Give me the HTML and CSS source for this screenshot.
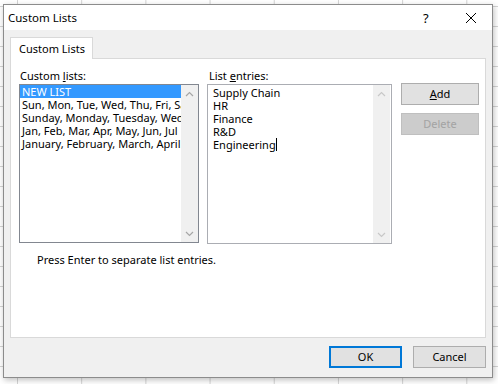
FILE: index.html
```html
<html>
    <head>
        <link rel="stylesheet" href="styles.css">
    </head>

    <body>
        <div class="dialog">
            <div class="titlebar">
                <span class="title">Custom Lists</span>
                <span class="help">?</span>
                <svg class="close" width="12" height="12" viewBox="0 0 12 12">
                    <path d="M1 1L11 11M11 1L1 11" stroke="#000" stroke-width="1" fill="none"/>
                </svg>
            </div>
            <div class="content">
                <div class="tabs">
                    <div class="tab">Custom Lists</div>
                </div>
                <div class="panel">
                    <div class="columns">
                        <div class="col">
                            <label class="field-label">Custom <u>l</u>ists:</label>
                            <div class="listbox">
                                <div class="rows">
                                    <div class="row selected">NEW LIST</div>
                                    <div class="row">Sun, Mon, Tue, Wed, Thu, Fri, Sat</div>
                                    <div class="row">Sunday, Monday, Tuesday, Wednesday</div>
                                    <div class="row">Jan, Feb, Mar, Apr, May, Jun, Jul</div>
                                    <div class="row">January, February, March, April</div>
                                </div>
                                <div class="scrollbar">
                                    <svg width="9" height="6" viewBox="0 0 9 6"><path d="M1 5L4.5 1.5L8 5" stroke="#a6a6a6" stroke-width="1.2" fill="none"/></svg>
                                    <svg width="9" height="6" viewBox="0 0 9 6"><path d="M1 1L4.5 4.5L8 1" stroke="#a6a6a6" stroke-width="1.2" fill="none"/></svg>
                                </div>
                            </div>
                        </div>
                        <div class="col">
                            <label class="field-label">List <u>e</u>ntries:</label>
                            <div class="listbox entries">
                                <div class="rows">
                                    <div class="row">Supply Chain</div>
                                    <div class="row">HR</div>
                                    <div class="row">Finance</div>
                                    <div class="row">R&amp;D</div>
                                    <div class="row">Engineering<span class="caret"></span></div>
                                </div>
                                <div class="scrollbar">
                                    <svg width="9" height="6" viewBox="0 0 9 6"><path d="M1 5L4.5 1.5L8 5" stroke="#c8c8c8" stroke-width="1.2" fill="none"/></svg>
                                    <svg width="9" height="6" viewBox="0 0 9 6"><path d="M1 1L4.5 4.5L8 1" stroke="#c8c8c8" stroke-width="1.2" fill="none"/></svg>
                                </div>
                            </div>
                        </div>
                        <div class="col-buttons">
                            <button class="btn"><u>A</u>dd</button>
                            <button class="btn" disabled>Delete</button>
                        </div>
                    </div>
                    <p class="hint">Press Enter to separate list entries.</p>
                </div>
                <div class="footer">
                    <button class="btn btn-footer btn-default">OK</button>
                    <button class="btn btn-footer">Cancel</button>
                </div>
            </div>
        </div>
    </body>
</html>
```

FILE: styles.css
```css
* {
    box-sizing: border-box;
}

body {
    margin: 0;
    width: 498px;
    height: 384px;
    overflow: hidden;
    font-family: "Noto Sans", sans-serif;
    font-size: 11px;
    color: #000;
    background-color: #fff;
    background-image:
        linear-gradient(to right, #d4d4d4 1px, transparent 1px),
        linear-gradient(to bottom, #d4d4d4 1px, transparent 1px);
    background-size: 64.2px 20px;
    background-position: 17px 0, 0 6px;
}

.dialog {
    margin: 4px 0 0 3px;
    width: 490px;
    height: 374px;
    border: 1px solid #8c8c8c;
    background: #f0f0f0;
    display: flex;
    flex-direction: column;
    box-shadow: 1px 2px 6px rgba(0, 0, 0, .25);
}

.titlebar {
    height: 25px;
    background: #fff;
    display: flex;
    align-items: center;
    padding: 0 0 0 4px;
}

.title {
    flex: 1;
    font-size: 11.5px;
    line-height: 14px;
}

.help {
    width: 14px;
    margin-right: 28px;
    font-size: 13px;
}

.close {
    margin-right: 15px;
}

.content {
    flex: 1;
    padding: 7px 6px 0 6px;
    display: flex;
    flex-direction: column;
}

.tabs {
    display: flex;
    height: 21px;
    position: relative;
    z-index: 1;
}

.tab {
    width: 83px;
    height: 22px;
    background: #fff;
    border: 1px solid #d9d9d9;
    border-bottom: none;
    padding: 3px 0 0 8px;
    line-height: 15px;
}

.panel {
    height: 280px;
    background: #fff;
    border: 1px solid #d9d9d9;
    padding: 9px 7px 0 8px;
}

.columns {
    display: flex;
    gap: 9px;
}

.col {
    display: flex;
    flex-direction: column;
}

.field-label {
    line-height: 15px;
    margin-bottom: 1px;
    padding-left: 1px;
}

.listbox {
    width: 180px;
    height: 159px;
    border: 1px solid #828790;
    display: flex;
}

.listbox.entries {
    width: 185px;
    height: 160px;
    border-color: #abadb3;
    margin-left: -1px;
}

.rows {
    flex: 1;
    overflow: hidden;
    white-space: nowrap;
}

.row {
    height: 13px;
    line-height: 13px;
    padding-left: 2px;
}

.entries .rows {
    padding: 1px 0 0 3px;
}

.selected {
    background: #3399ff;
    color: #fff;
}

.caret {
    display: inline-block;
    width: 1px;
    height: 13px;
    background: #000;
    vertical-align: top;
}

.scrollbar {
    width: 17px;
    background: #f0f0f0;
    display: flex;
    flex-direction: column;
    justify-content: space-between;
    align-items: center;
    padding: 6px 0 5px 0;
}

.entries .scrollbar {
    margin-right: 1px;
}

.col-buttons {
    display: flex;
    flex-direction: column;
    gap: 8px;
    margin-top: 15px;
}

.btn {
    font-family: "Noto Sans", sans-serif;
    font-size: 11px;
    width: 78px;
    height: 22px;
    padding: 0;
    border: 1px solid #adadad;
    background: #e1e1e1;
    color: #000;
    line-height: 18px;
}

.btn:disabled {
    background: #cccccc;
    border-color: #bfbfbf;
    color: #a3a3a3;
}

.hint {
    margin: 8px 0 0 18px;
    line-height: 15px;
}

.footer {
    display: flex;
    justify-content: flex-end;
    gap: 11px;
    margin-top: 8px;
}

.btn-footer {
    width: 73px;
}

.btn-default {
    border: 2px solid #0078d7;
}
```
